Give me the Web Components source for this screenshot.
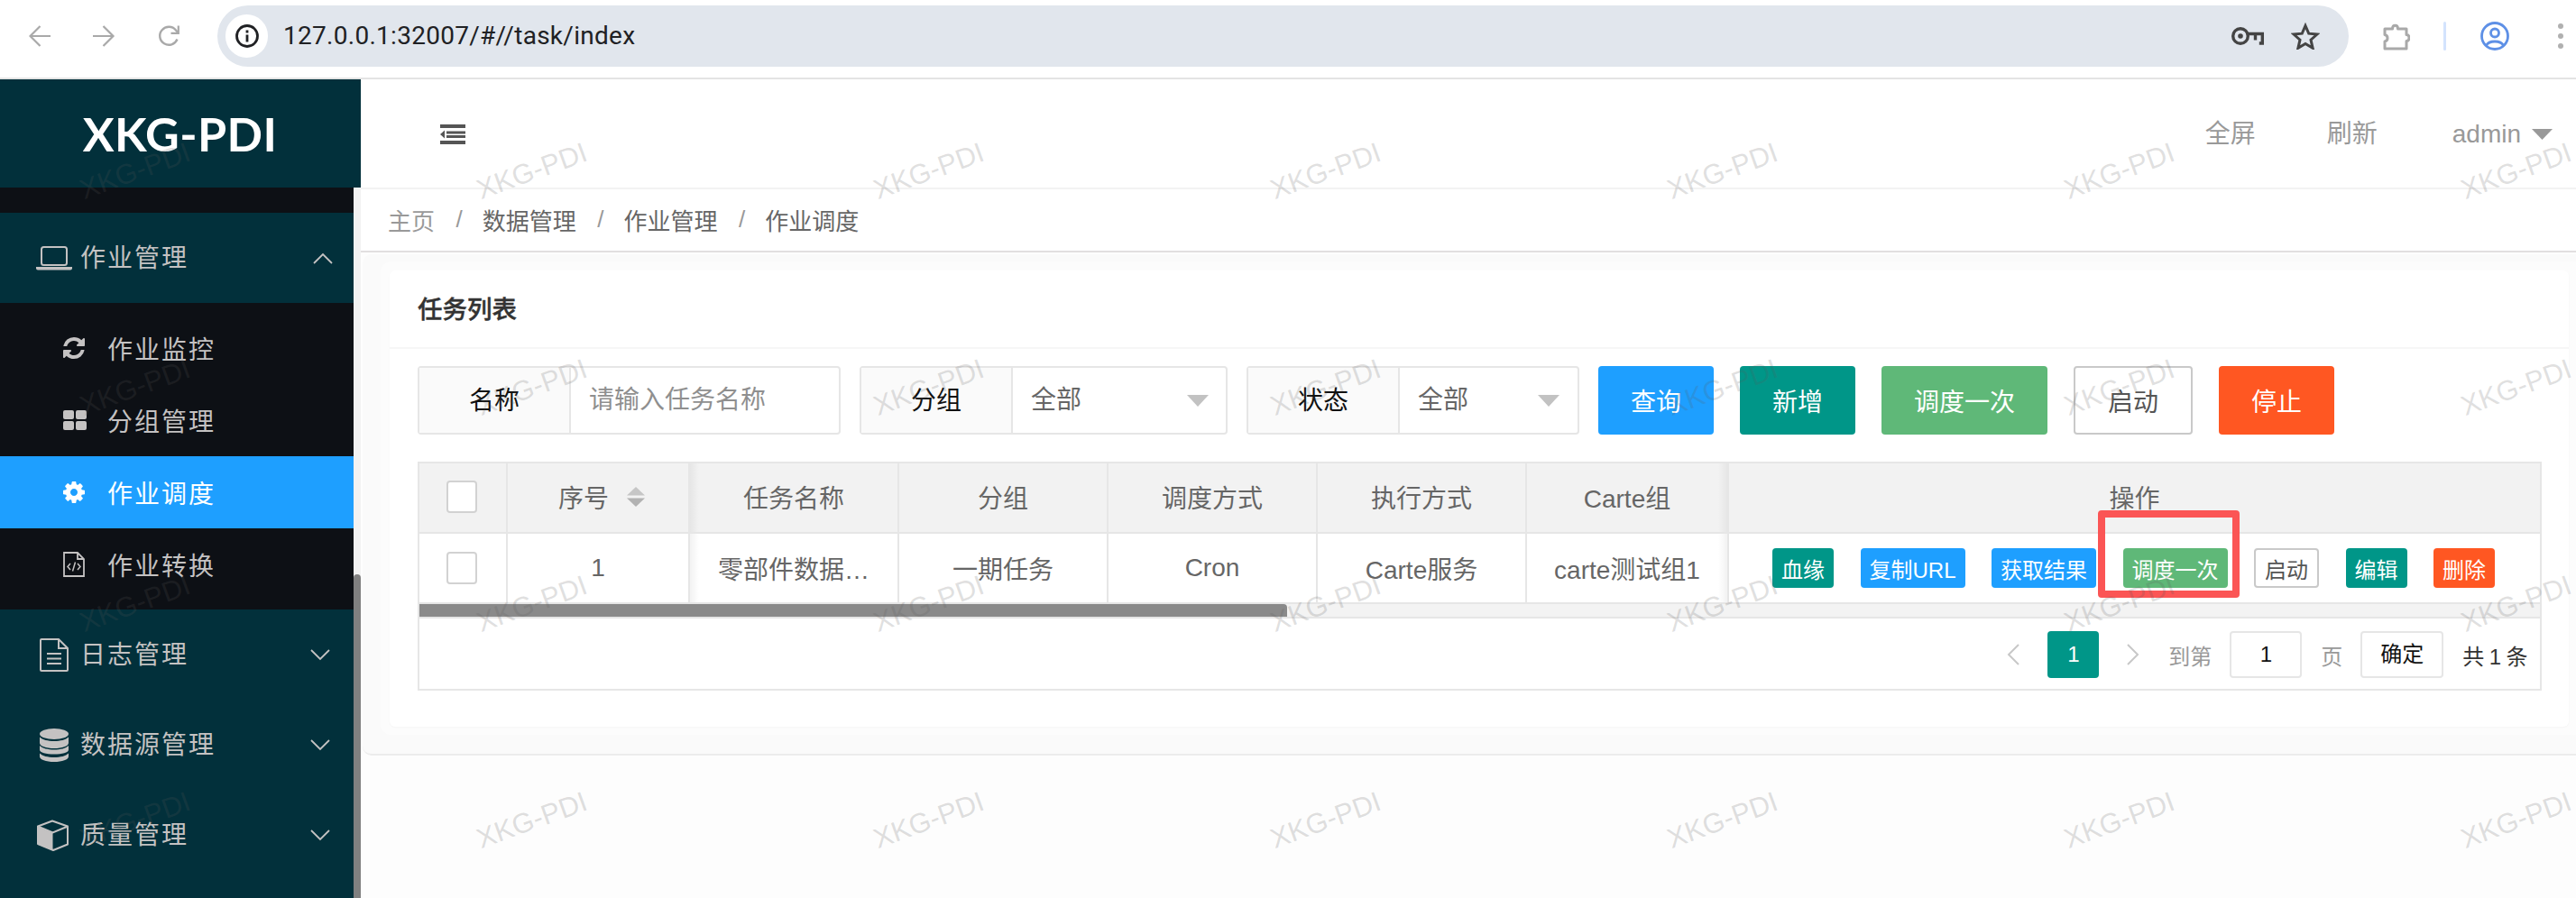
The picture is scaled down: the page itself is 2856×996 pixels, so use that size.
<!DOCTYPE html>
<html lang="zh-CN">
<head>
<meta charset="utf-8">
<title>XKG-PDI</title>
<style>
  html, body { margin: 0; height: 100%; overflow: hidden; background: #fff; }
  body { font-family: "Liberation Sans", "Noto Sans CJK SC", sans-serif; position: relative; }
  .app { display: flex; height: 908px; }
</style>
</head>
<body>
<browser-bar url="127.0.0.1:32007/#//task/index"></browser-bar>
<div class="app">
  <side-bar>
    <nav-group label="作业管理" icon="laptop" open></nav-group>
    <sub-menu>
      <nav-item icon="refresh">作业监控</nav-item>
      <nav-item icon="grid">分组管理</nav-item>
      <nav-item icon="gear" active>作业调度</nav-item>
      <nav-item icon="code">作业转换</nav-item>
    </sub-menu>
    <nav-group label="日志管理" icon="file"></nav-group>
    <nav-group label="数据源管理" icon="db"></nav-group>
    <nav-group label="质量管理" icon="cube"></nav-group>
  </side-bar>
  <main-area>
    <top-header></top-header>
    <bread-crumb></bread-crumb>
    <page-panel>
      <task-card title-text="任务列表">
        <filter-bar>
          <filter-group label="名称" width="469" placeholder="请输入任务名称"></filter-group>
          <filter-group label="分组" width="408" value="全部" caret-right="19"></filter-group>
          <filter-group label="状态" width="369" value="全部" caret-right="20"></filter-group>
          <tool-buttons slot="buttons">
            <ui-btn color="#1e9fff">查询</ui-btn>
            <ui-btn color="#009688">新增</ui-btn>
            <ui-btn color="#5fb878">调度一次</ui-btn>
            <ui-btn plain>启动</ui-btn>
            <ui-btn color="#ff5722">停止</ui-btn>
          </tool-buttons>
        </filter-bar>
        <task-table>
          <ui-btn slot="ops" small color="#009688">血缘</ui-btn>
          <ui-btn slot="ops" small color="#1e9fff">复制URL</ui-btn>
          <ui-btn slot="ops" small color="#1e9fff">获取结果</ui-btn>
          <ui-btn slot="ops" small color="#5fb878">调度一次</ui-btn>
          <ui-btn slot="ops" small plain>启动</ui-btn>
          <ui-btn slot="ops" small color="#009688">编辑</ui-btn>
          <ui-btn slot="ops" small color="#ff5722">删除</ui-btn>
        </task-table>
      </task-card>
    </page-panel>
  </main-area>
</div>
<water-marks text="XKG-PDI"></water-marks>

<script>
const ICONS = {
  laptop: `<svg width="40" height="27" viewBox="0 0 40 27"><rect x="6" y="1" width="28" height="20" rx="2.5" fill="none" stroke="currentColor" stroke-width="2"/><path d="M0 23h40v1.5a2 2 0 0 1-2 2H2a2 2 0 0 1-2-2z" fill="currentColor"/></svg>`,
  file: `<svg width="32" height="37" viewBox="0 0 32 37" style="margin-left:4px"><path d="M1 2a1 1 0 0 1 1-1h19l10 10v24a1 1 0 0 1-1 1H2a1 1 0 0 1-1-1z M21 1v10h10" fill="none" stroke="currentColor" stroke-width="2"/><path d="M8 17h16M8 22.500h16M8 28h16" stroke="currentColor" stroke-width="2"/></svg>`,
  db: `<svg width="32" height="37" viewBox="0 0 32 37" style="margin-left:4px"><g fill="currentColor"><ellipse cx="16" cy="6" rx="16" ry="6"/><path d="M0 9.500c3 3 9 4.500 16 4.500s13-1.500 16-4.500V16c0 3.500-7 6-16 6S0 19.500 0 16z"/><path d="M0 19c3 3 9 4.500 16 4.500S29 22 32 19v4.500c0 3.500-7 5-16 5s-16-1.500-16-5z"/><path d="M0 27.500c3 3 9 4.500 16 4.500s13-1.500 16-4.500V31c0 3.500-7 6-16 6S0 34.500 0 31z"/></g></svg>`,
  cube: `<svg width="35" height="35" viewBox="0 0 35 35" style="margin-left:1px"><path d="M1 7.500 17 1.500l17 6v20L18 34 1 27z" fill="none" stroke="currentColor" stroke-width="2" stroke-linejoin="round"/><path d="M2 8l15.500 6.500L33 8" fill="none" stroke="currentColor" stroke-width="2"/><path d="M1 8l16.500 7V34L1 27.500z" fill="currentColor"/></svg>`,
  refresh: `<svg width="24" height="24" viewBox="128 128 1536 1536"><path fill="currentColor" d="M1639 1056q0 5-1 7-64 268-268 434.500t-478 166.500q-146 0-282.500-55t-243.500-157l-129 129q-19 19-45 19t-45-19-19-45v-448q0-26 19-45t45-19h448q26 0 45 19t19 45-19 45l-137 137q71 66 161 102t187 36q134 0 250-65t186-179q11-17 53-117 8-23 30-23h192q13 0 22.500 9.500t9.500 22.500zm25-800v448q0 26-19 45t-45 19h-448q-26 0-45-19t-19-45 19-45l138-138q-148-137-349-137-134 0-250 65t-186 179q-11 17-53 117-8 23-30 23h-199q-13 0-22.500-9.500t-9.500-22.500v-7q65-268 270-434.500t480-166.500q146 0 284 55.500t245 156.500l130-129q19-19 45-19t45 19 19 45z"/></svg>`,
  grid: `<svg width="26" height="22" viewBox="0 0 26 22"><g fill="currentColor"><rect width="12" height="10" rx="2"/><rect x="14" width="12" height="10" rx="2"/><rect y="12" width="12" height="10" rx="2"/><rect x="14" y="12" width="12" height="10" rx="2"/></g></svg>`,
  gear: `<svg width="24" height="24" viewBox="128 128 1536 1536"><path fill="currentColor" d="M1152 896q0-106-75-181t-181-75-181 75-75 181 75 181 181 75 181-75 75-181zm512-109v222q0 12-8 23t-20 13l-185 28q-19 54-39 91 35 50 107 138 10 12 10 25t-9 23q-27 37-99 108t-94 71q-12 0-26-9l-138-108q-44 23-91 38-16 136-29 186-7 28-36 28h-222q-14 0-24.500-8.500t-11.500-21.500l-28-184q-49-16-90-37l-141 107q-10 9-25 9-14 0-25-11-126-114-165-168-7-10-7-23 0-12 8-23 15-21 51-66.500t54-70.500q-27-50-41-99l-183-27q-13-2-21-12.500t-8-23.500v-222q0-12 8-23t19-13l186-28q14-46 39-92-40-57-107-138-10-12-10-24 0-10 9-23 26-36 98.500-107.500t94.500-71.500q13 0 26 10l138 107q44-23 91-38 16-136 29-186 7-28 36-28h222q14 0 24.500 8.500t11.500 21.500l28 184q49 16 90 37l142-107q9-9 24-9 13 0 25 10 129 119 165 170 7 8 7 22 0 12-8 23-15 21-51 66.500t-54 70.500q26 50 41 98l183 28q13 2 21 12.500t8 23.500z"/></svg>`,
  code: `<svg width="24" height="28" viewBox="0 0 24 28"><path d="M1 1h15l7 7v19H1z M16 1v7h7" fill="none" stroke="currentColor" stroke-width="1.800"/><path d="M8 13l-3 3.500 3 3.500M16 13l3 3.500-3 3.500M13.500 11.500l-3 10" fill="none" stroke="currentColor" stroke-width="1.500"/></svg>`
};

class BrowserBar extends HTMLElement {
  constructor() { super(); this.attachShadow({ mode: "open" }); }
  connectedCallback() {
    const url = this.getAttribute("url") || "";
    this.shadowRoot.innerHTML = `
      <style>
        :host { display: flex; align-items: center; height: 80px; padding-bottom: 6px; border-bottom: 2px solid #e4e4e4; background: #fff; }
        svg { display: block; flex: none; }
        .nav { color: #a9a9a9; }
        .pill { width: 2363px; height: 68px; margin-left: 40px; border-radius: 34px; background: #e1e6ed; display: flex; align-items: center; }
        .info { width: 47px; height: 48px; margin-left: 9px; border-radius: 24px; background: #fff; display: flex; align-items: center; justify-content: center; }
        .url { margin-left: 17px; font: 28px/40px Roboto, sans-serif; letter-spacing: .28px; color: #202124; }
        .end { margin-left: auto; display: flex; align-items: center; }
      </style>
      <svg class="nav" style="margin-left:32px" width="24" height="24" viewBox="0 0 24 24" fill="none" stroke="currentColor" stroke-width="2.200"><path d="M24 12H2M12.500 1 1.500 12l11 11"/></svg>
      <svg class="nav" style="margin-left:47px" width="25" height="24" viewBox="0 0 25 24" fill="none" stroke="currentColor" stroke-width="2.200"><path d="M0 12h22M11.500 1l11 11-11 11"/></svg>
      <svg class="nav" style="margin-left:47px" width="26" height="26" viewBox="0 0 26 26" fill="none" stroke="currentColor" stroke-width="2.400"><path d="M21.500 16.500A10 10 0 1 1 20 6.500l2.200 2.500"/><path d="M22.800 1.500v8.300h-8.300" stroke-width="2.200"/></svg>
      <div class="pill">
        <div class="info"><svg width="26" height="26" viewBox="0 0 26 26"><circle cx="13" cy="13" r="11.500" fill="none" stroke="#202124" stroke-width="2.800"/><rect x="11.600" y="11.500" width="2.800" height="8" fill="#202124"/><rect x="11.600" y="6.500" width="2.800" height="3" fill="#202124"/></svg></div>
        <span class="url">${url}</span>
        <div class="end">
          <svg width="36" height="20" viewBox="0 0 36 20" fill="none" stroke="#444" stroke-width="3.400"><circle cx="10" cy="10" r="8.300"/><circle cx="10" cy="10" r="2.800" fill="#444" stroke="none"/><path d="M18 7.500h16.300v10.500h-3.500M26.500 7.500v7"/></svg>
          <svg style="margin:0 32px 0 30px" width="32" height="30" viewBox="0 0 32 30" fill="none" stroke="#444" stroke-width="3"><path d="M16 3.500l3.700 8.700 9.300.8-7 6.200 2.100 9.100L16 23.500l-8.100 4.800L10 19.200l-7-6.200 9.300-.8z"/></svg>
        </div>
      </div>
      <svg style="margin-left:38px" width="30" height="31" viewBox="0 0 30 31" fill="none" stroke="#a9a9a9" stroke-width="3"><path d="M2 7h8.500c0-5 6-5 6 0H26v6.500c4 0 4 7 0 7V29H2v-8c4-1 4-6.500 0-7.500z" stroke-linejoin="round"/></svg>
      <span style="margin-left:37px;width:3px;height:32px;background:#d3e3fd;border-radius:2px"></span>
      <svg style="margin-left:38px" width="32" height="32" viewBox="0 0 32 32" fill="none" stroke="#5e90e6" stroke-width="2.800"><circle cx="16" cy="16" r="14.500"/><circle cx="16" cy="12.500" r="4.500"/><path d="M6.500 26.500c3-6 16-6 19 0"/></svg>
      <svg style="margin-left:54px" width="6" height="28" viewBox="0 0 6 28" fill="#b0b0b0"><circle cx="3" cy="3" r="3"/><circle cx="3" cy="14" r="3"/><circle cx="3" cy="25" r="3"/></svg>
    `;
  }
}
customElements.define("browser-bar", BrowserBar);

class SideBar extends HTMLElement {
  constructor() { super(); this.attachShadow({ mode: "open" }); }
  connectedCallback() {
    this.shadowRoot.innerHTML = `
      <style>
        :host { display: flex; flex-direction: column; flex: none; width: 400px; background: #02303b; }
        .logo { height: 120px; display: flex; align-items: center; justify-content: center; padding-right: 1px; font: 700 52px/60px Lato, sans-serif; letter-spacing: .4px; color: #fff; }
        .body { flex: 1; display: flex; min-height: 0; }
        .menu { width: 392px; }
        .top { height: 28px; background: #0d1015; }
        .track { width: 8px; background: #f2f2f2; display: flex; flex-direction: column; justify-content: flex-end; }
        .thumb { height: 359px; background: #808080; border-radius: 4px 4px 0 0; }
      </style>
      <div class="logo">XKG-PDI</div>
      <div class="body">
        <div class="menu"><div class="top"></div><slot></slot></div>
        <div class="track"><div class="thumb"></div></div>
      </div>
    `;
  }
}
customElements.define("side-bar", SideBar);

class NavGroup extends HTMLElement {
  constructor() { super(); this.attachShadow({ mode: "open" }); }
  connectedCallback() {
    const open = this.hasAttribute("open");
    const chevron = open
      ? `<svg style="margin-right:23px" width="22" height="13" viewBox="0 0 22 13" fill="none" stroke="currentColor" stroke-width="1.800"><path d="M1 12 11 2l10 10"/></svg>`
      : `<svg style="margin-right:26px" width="22" height="13" viewBox="0 0 22 13" fill="none" stroke="currentColor" stroke-width="1.800"><path d="M1 1l10 10L21 1"/></svg>`;
    this.shadowRoot.innerHTML = `
      <style>
        :host { display: flex; align-items: center; height: 100px; padding-left: 40px; color: #c4c2c2; background: #02303b; }
        .ic { width: 49px; flex: none; display: flex; align-items: center; }
        svg { display: block; flex: none; }
        .t { font-size: 28px; line-height: 40px; letter-spacing: 2px; position: relative; top: 1px; }
        .c { margin-left: auto; }
      </style>
      <span class="ic">${ICONS[this.getAttribute("icon")]}</span>
      <span class="t">${this.getAttribute("label")}</span>
      <span class="c">${chevron}</span>
    `;
  }
}
customElements.define("nav-group", NavGroup);

class SubMenu extends HTMLElement {
  constructor() {
    super();
    this.attachShadow({ mode: "open" }).innerHTML = `
      <style>:host { display: block; padding: 10px 0; background: #0d1015; }</style>
      <slot></slot>`;
  }
}
customElements.define("sub-menu", SubMenu);

class NavItem extends HTMLElement {
  constructor() { super(); this.attachShadow({ mode: "open" }); }
  connectedCallback() {
    this.shadowRoot.innerHTML = `
      <style>
        :host { display: flex; align-items: center; height: 80px; padding-left: 70px; color: #c4c2c2; font-size: 28px; letter-spacing: 2px; }
        :host([active]) { background: #1e9fff; color: #fff; }
        .ic { width: 49px; flex: none; display: flex; }
        svg { display: block; }
      </style>
      <span class="ic">${ICONS[this.getAttribute("icon")]}</span>
      <slot></slot>
    `;
  }
}
customElements.define("nav-item", NavItem);

class MainArea extends HTMLElement {
  constructor() {
    super();
    this.attachShadow({ mode: "open" }).innerHTML = `
      <style>:host { display: flex; flex-direction: column; flex: 1; min-width: 0; background: #fdfdfd; }</style>
      <slot></slot>`;
  }
}
customElements.define("main-area", MainArea);

class TopHeader extends HTMLElement {
  constructor() { super(); this.attachShadow({ mode: "open" }); }
  connectedCallback() {
    this.shadowRoot.innerHTML = `
      <style>
        :host { display: flex; align-items: center; height: 118px; padding: 2px 0 0 88px; border-bottom: 2px solid #f3f3f3; background: #fff; color: #999; font-size: 28px; }
        svg { display: block; flex: none; }
        .r { margin-left: auto; display: flex; align-items: center; }
        .r span { line-height: 40px; }
        .a { margin-left: 83px; }
        .b { margin-left: 79px; }
        .tri { margin: -1px 26px 0 12px; }
      </style>
      <svg width="28" height="22" viewBox="0 0 28 22" fill="#555"><rect width="28" height="4"/><rect x="7" y="7.500" width="21" height="3"/><rect x="7" y="12" width="21" height="3"/><rect y="18" width="28" height="4"/><path d="M5 6.500v9L0 11z"/></svg>
      <div class="r">
        <span>全屏</span><span class="b">刷新</span><span class="a">admin</span>
        <svg class="tri" width="23" height="12" viewBox="0 0 23 12" fill="#999"><path d="M0 0h23L11.500 12z"/></svg>
      </div>
    `;
  }
}
customElements.define("top-header", TopHeader);

class BreadCrumb extends HTMLElement {
  constructor() { super(); this.attachShadow({ mode: "open" }); }
  connectedCallback() {
    const sep = `<i>/</i>`;
    this.shadowRoot.innerHTML = `
      <style>
        :host { display: flex; align-items: center; height: 66px; padding: 0 0 2px 30px; border-bottom: 2px solid #e2dfe0; background: #fff; font-size: 26px; color: #666; }
        i { font-style: normal; color: #999; margin: 0 22px 0 23.500px; }
        .f { color: #999; }
      </style>
      <span class="f">主页</span>${sep}<span>数据管理</span>${sep}<span>作业管理</span>${sep}<span>作业调度</span>
    `;
  }
}
customElements.define("bread-crumb", BreadCrumb);

class PagePanel extends HTMLElement {
  constructor() {
    super();
    this.attachShadow({ mode: "open" }).innerHTML = `
      <style>
        :host { display: block; box-sizing: border-box; height: 556px; margin: 2px 0 0 2px; padding: 8px 0 0 20px; background: #fafafa; border-bottom: 2px solid #ececec; border-radius: 10px 0 0 10px; }
        .mid { box-sizing: border-box; height: 525px; padding: 10px 0 0 10px; background: #fcfcfc; border-radius: 12px 0 0 12px; }
      </style>
      <div class="mid"><slot></slot></div>`;
  }
}
customElements.define("page-panel", PagePanel);

class TaskCard extends HTMLElement {
  constructor() { super(); this.attachShadow({ mode: "open" }); }
  connectedCallback() {
    this.shadowRoot.innerHTML = `
      <style>
        :host { display: block; box-sizing: border-box; width: 2416px; height: 506px; background: #fff; border-radius: 6px; box-shadow: 0 1px 2px rgba(0,0,0,.03); }
        .head { height: 85px; border-bottom: 2px solid #f6f6f6; padding-left: 31px; font-size: 27.500px; font-weight: 500; line-height: 88px; color: #333; -webkit-text-stroke: .4px #333; }
        .body { padding: 19px 30px 0 31px; }
      </style>
      <div class="head">${this.getAttribute("title-text")}</div>
      <div class="body"><slot></slot></div>
    `;
  }
}
customElements.define("task-card", TaskCard);

class FilterBar extends HTMLElement {
  constructor() {
    super();
    this.attachShadow({ mode: "open" }).innerHTML = `
      <style>:host { display: flex; gap: 21px; margin-bottom: 30px; white-space: nowrap; }</style>
      <slot></slot><slot name="buttons"></slot>`;
  }
}
customElements.define("filter-bar", FilterBar);

class FilterGroup extends HTMLElement {
  constructor() { super(); this.attachShadow({ mode: "open" }); }
  connectedCallback() {
    const ph = this.getAttribute("placeholder");
    const value = this.getAttribute("value");
    const right = this.getAttribute("caret-right") || 20;
    const inner = ph
      ? `<span class="ph">${ph}</span>`
      : `<span class="val">${value}</span><svg style="margin-right:${right}px" width="24" height="13" viewBox="0 0 24 13" fill="#c2c2c2"><path d="M0 0h24L12 13z"/></svg>`;
    this.shadowRoot.innerHTML = `
      <style>
        :host { display: flex; box-sizing: border-box; width: ${this.getAttribute("width")}px; height: 76px; border: 2px solid #e6e6e6; border-radius: 4px; background: #fff; font-size: 28px; line-height: 74px; }
        .lab { flex: none; width: 168px; box-sizing: border-box; border-right: 2px solid #e6e6e6; background: #fafafa; text-align: center; color: #111; }
        .rest { flex: 1; display: flex; align-items: center; justify-content: space-between; padding-left: 20px; }
        .ph { color: #8f8f8f; }
        .val { color: #666; }
      </style>
      <span class="lab">${this.getAttribute("label")}</span>
      <span class="rest">${inner}</span>
    `;
  }
}
customElements.define("filter-group", FilterGroup);

class ToolButtons extends HTMLElement {
  constructor() {
    super();
    this.attachShadow({ mode: "open" }).innerHTML = `
      <style>:host { display: flex; gap: 29px; }</style>
      <slot></slot>`;
  }
}
customElements.define("tool-buttons", ToolButtons);

class UiBtn extends HTMLElement {
  constructor() { super(); this.attachShadow({ mode: "open" }); }
  connectedCallback() {
    const color = this.getAttribute("color") || "#fff";
    this.shadowRoot.innerHTML = `
      <style>
        :host { display: inline-flex; align-items: center; justify-content: center; box-sizing: border-box; height: 76px; padding: 0 36px; border-radius: 4px; background: ${color}; color: #fff; font-size: 28px; white-space: nowrap; }
        :host([small]) { height: 44px; padding: 0 10px; font-size: 24px; }
        :host([plain]) { border: 2px solid #c9c9c9; color: #555; }
      </style>
      <slot></slot>
    `;
  }
}
customElements.define("ui-btn", UiBtn);

class TaskTable extends HTMLElement {
  constructor() { super(); this.attachShadow({ mode: "open" }); }
  connectedCallback() {
    const box = `<span class="box"></span>`;
    const heads = ["任务名称", "分组", "调度方式", "执行方式", "Carte组"];
    const cells = ["零部件数据…", "一期任务", "Cron", "Carte服务", "carte测试组1"];
    const cellClass = i => i === 0 ? "cell sl" : i === 4 ? "cell sr" : "cell";
    this.shadowRoot.innerHTML = `
      <style>
        :host { display: block; position: relative; box-sizing: border-box; width: 2355px; border: 2px solid #e6e6e6; color: #666; font-size: 28px; }
        .row { display: grid; grid-template-columns: 98px 202px 232px 232px 232px 232px 224px 1fr; height: 78px; border-bottom: 2px solid #e6e6e6; box-sizing: border-box; }
        .row.h { background: #f2f2f2; }
        .cell { display: flex; align-items: center; justify-content: center; border-right: 2px solid #e6e6e6; white-space: nowrap; }
        .h .cell { padding-bottom: 2px; }
        .cell:last-child { border-right: 0; }
        .sl { background-image: linear-gradient(to right, rgba(0,0,0,.05), rgba(0,0,0,0) 10px); }
        .sr { background-image: linear-gradient(to left, rgba(0,0,0,.05), rgba(0,0,0,0) 10px); }
        .box { width: 34px; height: 36px; box-sizing: border-box; border: 2px solid #d2d2d2; border-radius: 4px; background: #fff; margin-right: 2px; }
        .seq { padding-left: 8px; }
        .sort { margin-left: 20px; }
        .ops { justify-content: flex-start; gap: 29.500px; padding-left: 48px; }
        .bar { height: 14px; border-bottom: 2px solid #e6e6e6; background: #f3f3f3; }
        .thumb { width: 962px; height: 14px; background: #8a8a8a; border-radius: 0 4px 0 0; }
        .pager { display: flex; align-items: center; justify-content: flex-end; box-sizing: border-box; height: 78px; padding: 2px 14px 0 0; font-size: 24px; color: #999; }
        .pager svg { display: block; }
        .cur { width: 57px; height: 52px; border-radius: 4px; background: #009688; color: #fff; text-align: center; line-height: 52px; margin-left: 31px; }
        .inp, .ok { box-sizing: border-box; height: 52px; border: 2px solid #e6e6e6; border-radius: 4px; text-align: center; line-height: 48px; color: #111; }
        .inp { width: 80px; margin: 0 21px 0 20px; }
        .ok { width: 92px; margin: 0 21px 0 20px; }
        .tot { color: #333; letter-spacing: -.6px; }
        .mark { position: absolute; left: 1861px; top: 52px; width: 157px; height: 97px; box-sizing: border-box; border: 8px solid #fb5555; border-radius: 4px; }
      </style>
      <div class="row h">
        <div class="cell">${box}</div>
        <div class="cell seq">序号<svg class="sort" width="20" height="22" viewBox="0 0 20 22"><path d="M10 0l10 9.500H0z" fill="#c6c6c6"/><path d="M10 22 20 12.500H0z" fill="#b2b2b2"/></svg></div>
        ${heads.map((t, i) => `<div class="${cellClass(i)}">${t}</div>`).join("")}
        <div class="cell">操作</div>
      </div>
      <div class="row">
        <div class="cell">${box}</div>
        <div class="cell">1</div>
        ${cells.map((t, i) => `<div class="${cellClass(i)}">${t}</div>`).join("")}
        <div class="cell ops"><slot name="ops"></slot></div>
      </div>
      <div class="bar"><div class="thumb"></div></div>
      <div class="pager">
        <svg width="14" height="24" viewBox="0 0 14 24" fill="none" stroke="#c8c8c8" stroke-width="2"><path d="M13 1 2 12l11 11"/></svg>
        <span class="cur">1</span>
        <svg style="margin:0 32px 0 31px" width="14" height="24" viewBox="0 0 14 24" fill="none" stroke="#c8c8c8" stroke-width="2"><path d="M1 1l11 11L1 23"/></svg>
        <span>到第</span><span class="inp">1</span><span>页</span><span class="ok">确定</span><span class="tot">共 1 条</span>
      </div>
      <div class="mark"></div>
    `;
  }
}
customElements.define("task-table", TaskTable);

class WaterMarks extends HTMLElement {
  constructor() { super(); this.attachShadow({ mode: "open" }); }
  connectedCallback() {
    const text = this.getAttribute("text");
    let marks = "";
    for (let i = 0; i < 28; i++) marks += `<div><span>${text}</span></div>`;
    this.shadowRoot.innerHTML = `
      <style>
        :host { position: absolute; inset: 0; overflow: hidden; pointer-events: none; }
        .grid { position: absolute; left: -70px; top: 70px; display: grid; grid-template-columns: repeat(7, 440px); grid-auto-rows: 240px; }
        .grid div { display: flex; align-items: center; justify-content: center; }
        span { font: 31px "Liberation Sans", sans-serif; color: rgba(90,90,90,.2); transform: rotate(-20deg); }
      </style>
      <div class="grid">${marks}</div>
    `;
  }
}
customElements.define("water-marks", WaterMarks);
</script>
</body>
</html>
